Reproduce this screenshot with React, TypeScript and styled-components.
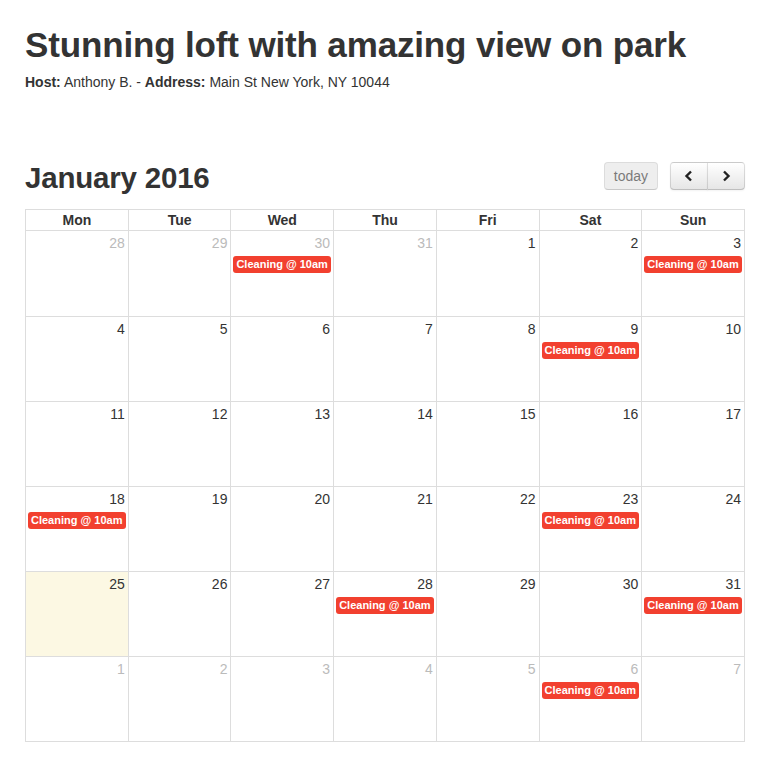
import React from "react";
import styled, { createGlobalStyle } from "styled-components";

const Global = createGlobalStyle`
  html, body { margin: 0; padding: 0; background: #fff; }
  body { font-family: "Liberation Sans", Arial, sans-serif; color: #333; }
`;

const Page = styled.div`
  width: 720px;
  padding: 0 30px 16px 25px;
`;

const Title = styled.h1`
  margin: 25px 0 0;
  font-size: 35px;
  line-height: 40px;
  font-weight: bold;
  color: #333;
  letter-spacing: -0.15px;
`;

const Info = styled.div`
  margin-top: 7px;
  font-size: 14px;
  line-height: 20px;
  b { font-weight: bold; }
`;

const Toolbar = styled.div`
  margin-top: 68px;
  height: 36px;
  margin-bottom: 13px;
  display: flex;
  align-items: flex-start;
  justify-content: space-between;
`;

const MonthTitle = styled.h2`
  margin: 0;
  font-size: 29.5px;
  line-height: 36px;
  font-weight: bold;
  letter-spacing: -0.2px;
`;

const Controls = styled.div`
  display: flex;
  gap: 12px;
  margin-top: 2px;
`;

const Btn = styled.button<{ $disabled?: boolean; $pos?: "left" | "right" | "single" }>`
  height: 28px;
  padding: 0 9px;
  font-family: "Liberation Sans", Arial, sans-serif;
  font-size: 14px;
  color: #333;
  border: 1px solid rgba(0, 0, 0, 0.12);
  border-bottom-color: rgba(0, 0, 0, 0.25);
  background: linear-gradient(#fff, #e6e6e6);
  box-shadow: inset 0 1px 0 rgba(255, 255, 255, 0.2), 0 1px 2px rgba(0, 0, 0, 0.05);
  display: flex;
  align-items: center;
  justify-content: center;
  border-radius: ${(p) =>
    p.$pos === "left" ? "4px 0 0 4px" : p.$pos === "right" ? "0 4px 4px 0" : "4px"};
  ${(p) => (p.$pos === "right" ? "margin-left: -1px;" : "")}
  ${(p) =>
    p.$disabled
      ? "opacity: 0.65; background: #e6e6e6; box-shadow: none; color: #333;"
      : ""}
`;

const Group = styled.div`
  display: flex;
`;

const NavBtn = styled(Btn)`
  width: 38px;
  padding: 0;
`;

const Calendar = styled.div`
  border: 1px solid #ddd;
  border-right: none;
  border-bottom: none;
`;

const Row = styled.div`
  display: grid;
  grid-template-columns: repeat(7, minmax(0, 1fr));
`;

const HeadCell = styled.div`
  height: 20px;
  line-height: 21px;
  text-align: center;
  font-weight: bold;
  font-size: 14px;
  border-right: 1px solid #ddd;
  border-bottom: 1px solid #ddd;
`;

const Day = styled.div<{ $today?: boolean; $first?: boolean }>`
  height: ${(p) => (p.$first ? 85 : 84)}px;
  min-width: 0;
  border-right: 1px solid #ddd;
  border-bottom: 1px solid #ddd;
  background: ${(p) => (p.$today ? "#fcf8e3" : "#fff")};
  display: flex;
  flex-direction: column;
`;

const DayNum = styled.div<{ $other?: boolean }>`
  text-align: right;
  padding: 4px 3px 0 0;
  font-size: 14px;
  line-height: 17px;
  color: ${(p) => (p.$other ? "#bbb" : "#333")};
`;

const Event = styled.div`
  margin: 4px 2px 0 2px;
  height: 17px;
  line-height: 17px;
  background: #f2402f;
  border-radius: 3px;
  color: #fff;
  font-size: 11px;
  font-weight: bold;
  padding-left: 3px;
  white-space: nowrap;
  overflow: hidden;
`;

const days = ["Mon", "Tue", "Wed", "Thu", "Fri", "Sat", "Sun"];

type Cell = { n: number; other?: boolean; ev?: boolean; today?: boolean };

const weeks: Cell[][] = [
  [
    { n: 28, other: true },
    { n: 29, other: true },
    { n: 30, other: true, ev: true },
    { n: 31, other: true },
    { n: 1 },
    { n: 2 },
    { n: 3, ev: true },
  ],
  [{ n: 4 }, { n: 5 }, { n: 6 }, { n: 7 }, { n: 8 }, { n: 9, ev: true }, { n: 10 }],
  [{ n: 11 }, { n: 12 }, { n: 13 }, { n: 14 }, { n: 15 }, { n: 16 }, { n: 17 }],
  [{ n: 18, ev: true }, { n: 19 }, { n: 20 }, { n: 21 }, { n: 22 }, { n: 23, ev: true }, { n: 24 }],
  [
    { n: 25, today: true },
    { n: 26 },
    { n: 27 },
    { n: 28, ev: true },
    { n: 29 },
    { n: 30 },
    { n: 31, ev: true },
  ],
  [
    { n: 1, other: true },
    { n: 2, other: true },
    { n: 3, other: true },
    { n: 4, other: true },
    { n: 5, other: true },
    { n: 6, other: true, ev: true },
    { n: 7, other: true },
  ],
];

const Chevron = ({ dir }: { dir: "left" | "right" }) => (
  <svg width="12" height="12" viewBox="0 0 12 12">
    <path
      d={dir === "left" ? "M8 1.5 L3.5 6 L8 10.5" : "M4 1.5 L8.5 6 L4 10.5"}
      fill="none"
      stroke="#222"
      strokeWidth="2.4"
    />
  </svg>
);

export default function App() {
  return (
    <Page>
      <Global />
      <Title>Stunning loft with amazing view on park</Title>
      <Info>
        <b>Host:</b> Anthony B. - <b>Address:</b> Main St New York, NY 10044
      </Info>
      <Toolbar>
        <MonthTitle>January 2016</MonthTitle>
        <Controls>
          <Btn $disabled>today</Btn>
          <Group>
            <NavBtn $pos="left">
              <Chevron dir="left" />
            </NavBtn>
            <NavBtn $pos="right">
              <Chevron dir="right" />
            </NavBtn>
          </Group>
        </Controls>
      </Toolbar>
      <Calendar>
        <Row>
          {days.map((d) => (
            <HeadCell key={d}>{d}</HeadCell>
          ))}
        </Row>
        {weeks.map((w, i) => (
          <Row key={i}>
            {w.map((c, j) => (
              <Day key={j} $today={c.today} $first={i === 0}>
                <DayNum $other={c.other}>{c.n}</DayNum>
                {c.ev && <Event>Cleaning @ 10am</Event>}
              </Day>
            ))}
          </Row>
        ))}
      </Calendar>
    </Page>
  );
}
